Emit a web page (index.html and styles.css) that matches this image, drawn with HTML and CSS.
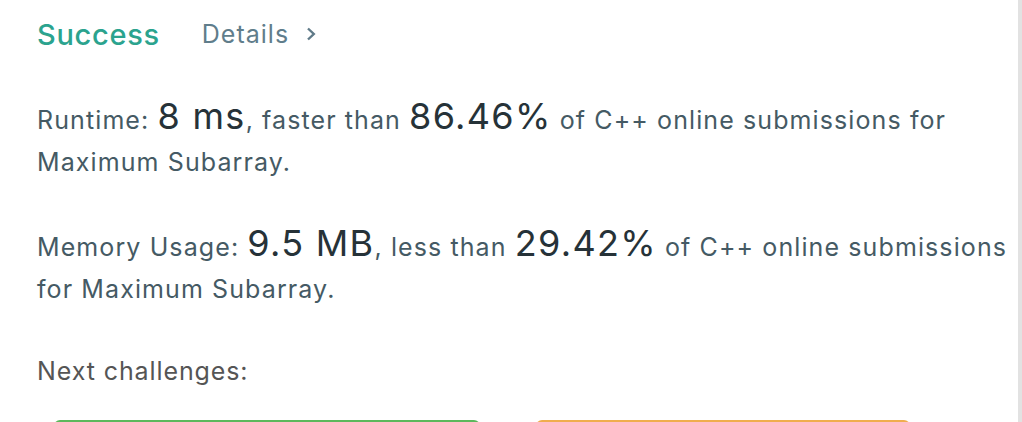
FILE: index.html
```html
<!DOCTYPE html>
<html>
<head>
<meta charset="utf-8">
<link rel="stylesheet" href="styles.css">
</head>
<body>
<div class="page">
  <main class="panel">
    <header class="result-head">
      <span class="status">Success</span>
      <a class="details">Details <svg class="chev" viewBox="0 0 10 14" width="10" height="14"><path d="M2 1.5 L7.8 7 L2 12.5" fill="none" stroke="#5f7a88" stroke-width="2.4"/></svg></a>
    </header>
    <p class="stat">Runtime: <span class="big">8 ms</span>, faster than <span class="big">86.46%</span> of C++ online submissions for Maximum Subarray.</p>
    <p class="stat">Memory Usage: <span class="big">9.5 MB</span>, less than <span class="big">29.42%</span> of C++ online submissions for Maximum Subarray.</p>
    <p class="next">Next challenges:</p>
    <div class="buttons">
      <div class="btn green"></div>
      <div class="btn orange"></div>
    </div>
  </main>
  <div class="scrollbar"></div>
</div>
</body>
</html>
```
FILE: styles.css
```css
html, body {
  margin: 0;
  padding: 0;
  background: #fff;
  overflow: hidden;
}
body {
  font-family: Inter, "Liberation Sans", sans-serif;
  width: 1022px;
  height: 422px;
}
.page {
  display: flex;
  height: 422px;
  overflow: hidden;
}
.panel {
  flex: 1;
  padding: 14px 0 0 37px;
}
.scrollbar {
  width: 4px;
  background: #e2e2e2;
}
.result-head {
  display: flex;
  align-items: center;
  gap: 42px;
  height: 40px;
}
.status {
  color: #2ba38e;
  font-size: 29px;
  letter-spacing: 0.7px;
  font-weight: 500;
}
.details {
  color: #607d8b;
  font-size: 25px;
  letter-spacing: 1px;
  display: flex;
  align-items: center;
  gap: 17px;
}
.stat {
  margin: 44px 0 0;
  font-size: 25px;
  letter-spacing: 1.1px;
  line-height: 42px;
  color: #455a64;
}
.stat + .stat {
  margin-top: 42px;
}
.big {
  font-size: 36px;
  letter-spacing: 1.3px;
  line-height: 1;
  color: #263238;
}
.next {
  margin: 40px 0 0;
  font-size: 25px;
  letter-spacing: 0.9px;
  line-height: 42px;
  color: #555;
}
.buttons {
  display: flex;
  gap: 56px;
  margin-top: 28px;
  padding-left: 17px;
}
.btn {
  height: 40px;
  border-radius: 6px;
  flex: none;
}
.green {
  width: 426px;
  background: #5cb85c;
}
.orange {
  width: 374px;
  background: #f0ad4e;
}
```
